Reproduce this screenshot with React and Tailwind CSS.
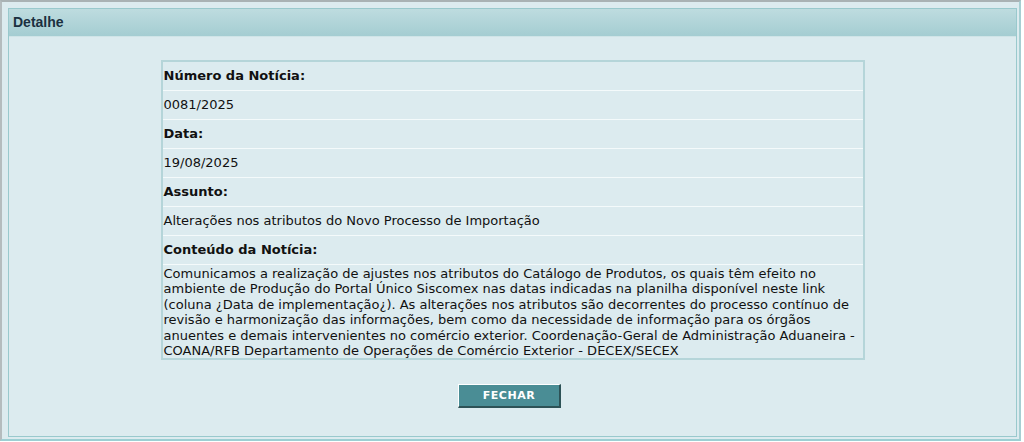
import React from 'react';

const ROWS = [
  { label: 'Número da Notícia:', value: '0081/2025' },
  { label: 'Data:', value: '19/08/2025' },
  { label: 'Assunto:', value: 'Alterações nos atributos do Novo Processo de Importação' },
];

const CONTEUDO =
  'Comunicamos a realização de ajustes nos atributos do Catálogo de Produtos, os quais têm efeito no ambiente de Produção do Portal Único Siscomex nas datas indicadas na planilha disponível neste link (coluna ¿Data de implementação¿). As alterações nos atributos são decorrentes do processo contínuo de revisão e harmonização das informações, bem como da necessidade de informação para os órgãos anuentes e demais intervenientes no comércio exterior. Coordenação-Geral de Administração Aduaneira - COANA/RFB Departamento de Operações de Comércio Exterior - DECEX/SECEX';

function Row({ children, bold }) {
  return (
    <div className={`flex items-center h-[29px] px-[1px] border-b border-[#f4fafb] ${bold ? 'font-bold' : ''}`}>
      {children}
    </div>
  );
}

export default function App() {
  return (
    <div className="w-[1021px] h-[441px] bg-[#dcebef] border-2 border-t-[#a9b2b4] border-l-[#b4bcbe] border-r-[#a6cfd3] border-b-[#9ccfd3] pl-[6px] pt-[6px] pr-[2px] pb-[2px] font-['DejaVu_Sans',Verdana,sans-serif]">
      <div className="h-full border border-[#99c9cd] flex flex-col">
        {/* Header */}
        <div className="h-[28px] bg-gradient-to-b from-[#bedcdf] to-[#a4cdd2] border-b border-[#cfe4e7] flex items-center pl-[4px]">
          <span className="font-['Liberation_Sans',Arial,sans-serif] font-bold text-[14px] text-[#1b3040]">Detalhe</span>
        </div>

        {/* Body */}
        <div className="flex-1 flex flex-col items-center pt-[23px]">
          <div className="w-[704px] border-2 border-[#b5d5d9] text-[13px] text-[#111]">
            {ROWS.map((r) => (
              <React.Fragment key={r.label}>
                <Row bold>{r.label}</Row>
                <Row>{r.value}</Row>
              </React.Fragment>
            ))}
            <Row bold>Conteúdo da Notícia:</Row>
            <div className="px-[1px] pt-[1px] leading-[15.4px]">{CONTEUDO}</div>
          </div>

          <button className="mt-[24px] -ml-[6px] w-[103px] h-[24px] bg-[#4a8d95] border border-t-white border-l-white border-r-2 border-b-2 border-r-[#2d5256] border-b-[#2d5256] text-white font-bold text-[11px] tracking-[0.5px]">
            FECHAR
          </button>
        </div>
      </div>
    </div>
  );
}
